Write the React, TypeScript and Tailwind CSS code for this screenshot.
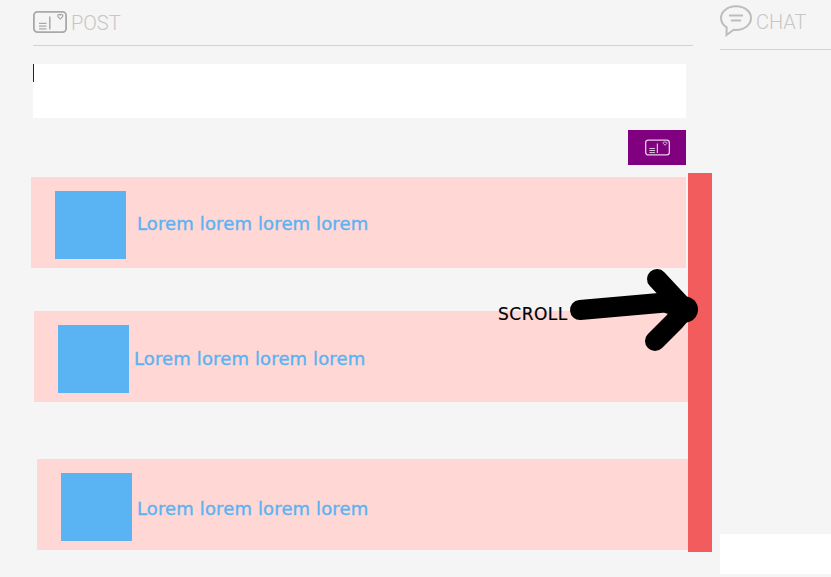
const sans = "font-['DejaVu_Sans',sans-serif]";
const thin = "font-['Roboto',sans-serif] font-light";

function PostIcon({ className, color }: { className: string; color: string }) {
  return (
    <svg viewBox="0 0 34 22" fill="none" stroke={color} strokeWidth="1.8" className={className}>
      <rect x="0.9" y="0.9" width="32.2" height="20.2" rx="3.5" />
      <path d="M6 12.3h7.500M6 15.100h7.500M6 17.900h7.500" strokeWidth="1.3" />
      <path d="M16.800 5.500V18.500" strokeWidth="1.5" />
      <path d="M24.800 4.300c.5-1 1.800-1.100 2.500-.3.700-.8 2-.7 2.500.3.400 1-.9 2.400-2.500 3.600-1.600-1.200-2.900-2.600-2.500-3.600z" strokeWidth="1.200" />
    </svg>
  );
}

function ChatIcon() {
  return (
    <svg viewBox="0 0 32 32" fill="none" stroke="#bdbdbd" strokeWidth="2" className="w-[32px] h-[32px] shrink-0">
      <path d="M16 1.200C7.600 1.200 1 6.500 1 13c0 3.800 2.200 7.100 5.700 9.300L6.500 30l7.200-5.300c.8.100 1.500.2 2.300.2 8.400 0 15-5.300 15-11.900S24.400 1.200 16 1.200z" />
      <path d="M9 10.500h14M11 15.500h10" />
    </svg>
  );
}

function Row({ outer, textMargin }: { outer: string; textMargin: string }) {
  return (
    <div className={`flex items-start h-[91px] bg-[#ffd7d5] ${outer}`}>
      <div className="w-[71px] h-[68px] mt-[14px] ml-[24px] bg-[#5ab3f2] shrink-0" />
      <span className={`${sans} ${textMargin} text-[18px] leading-[18px] tracking-[0.13px] [-webkit-text-stroke:0.35px_#5ab3f2] text-[#5ab3f2] whitespace-nowrap`}>Lorem lorem lorem lorem</span>
    </div>
  );
}

export default function App() {
  return (
    <div className="relative flex w-[831px] h-[577px] overflow-hidden bg-[#f5f5f5]">
      <div className="flex flex-col w-[712px] pl-[31px] shrink-0">
        <div className="flex items-start gap-[4px] ml-[2px] w-[660px] h-[46px] pt-[11px] border-b border-[#d2d2d2]">
          <PostIcon className="w-[34px] h-[22px] shrink-0" color="#a9a9a9" />
          <span className={`${thin} text-[20px] leading-[24px] text-[#c6c6c6]`}>POST</span>
        </div>
        <div className="relative ml-[2px] mt-[18px] w-[653px] h-[54px] bg-white">
          <div className="w-px h-[18px] bg-[#222]" />
        </div>
        <div className="flex justify-end w-[655px] mt-[12px]">
          <button className="flex items-center justify-center w-[58px] h-[35px] bg-[#800080]">
            <PostIcon className="w-[25px] h-[17px]" color="#e6cfe6" />
          </button>
        </div>
        <div className="flex mt-[8px]">
          <div className="flex flex-col w-[657px] pt-[4px]">
            <Row outer="w-[655px]" textMargin="ml-[11px] mt-[38px]" />
            <Row outer="ml-[3px] mt-[43px] w-[654px]" textMargin="ml-[5px] mt-[39px]" />
            <Row outer="ml-[6px] mt-[57px] w-[651px]" textMargin="ml-[5px] mt-[41px]" />
          </div>
          <div className="w-[24px] h-[379px] bg-[#f25c5c] shrink-0" />
        </div>
      </div>
      <div className="flex flex-col flex-1 ml-[8px]">
        <div className="flex items-start gap-[4px] h-[50px] pt-[5px] border-b border-[#d2d2d2]">
          <ChatIcon />
          <span className={`${thin} text-[20px] leading-[24px] mt-[5px] text-[#c6c6c6]`}>CHAT</span>
        </div>
        <div className="mt-auto mb-[3px] h-[40px] bg-white" />
      </div>
      <span className={`absolute left-[498px] top-[305px] ${sans} text-[17px] leading-[19px] tracking-[0.5px] [-webkit-text-stroke:0.2px_#000] text-black`}>SCROLL</span>
      <svg className="absolute left-0 top-0 w-[831px] h-[577px] pointer-events-none" viewBox="0 0 831 577" fill="none" stroke="#000" strokeWidth="20" strokeLinecap="round" strokeLinejoin="round">
        <path d="M580 310L665 302.500L685 309M657 279L685 309M655 341L674 322L685 309" />
        <circle cx="685" cy="309.500" r="13" fill="#000" stroke="none" />
      </svg>
    </div>
  );
}
